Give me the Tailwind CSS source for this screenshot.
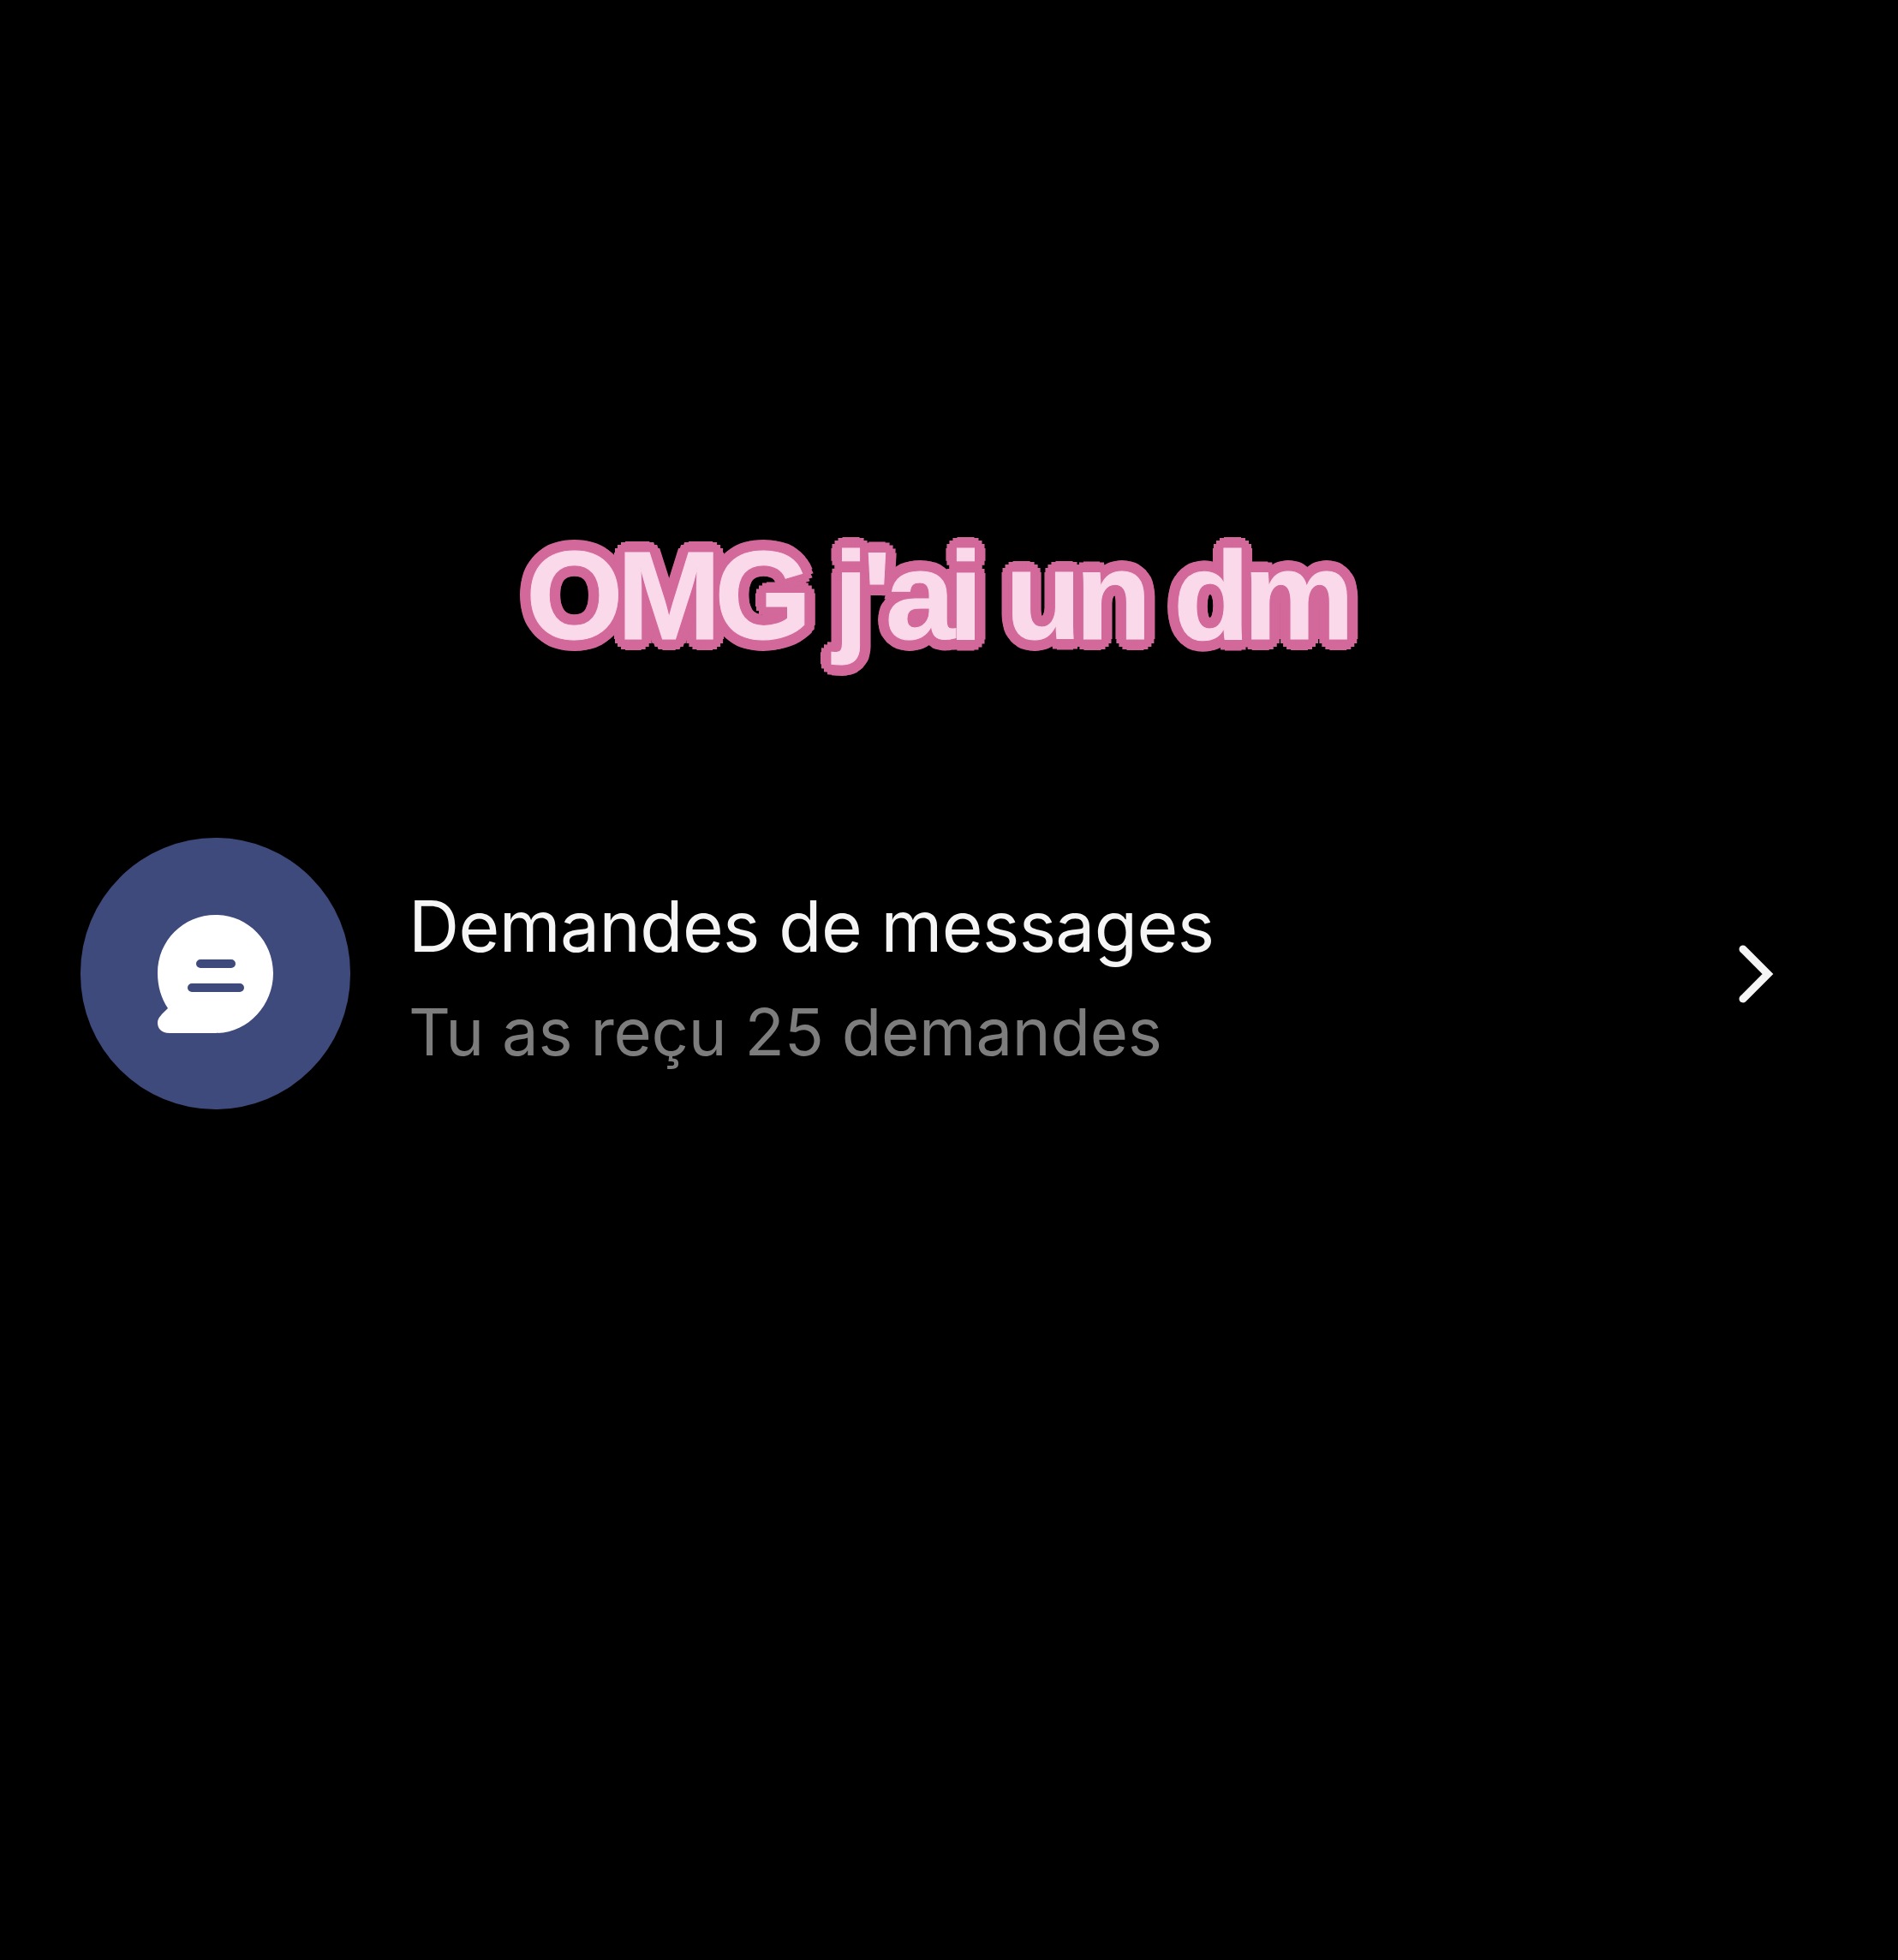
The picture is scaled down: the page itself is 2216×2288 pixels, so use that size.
<!DOCTYPE html>
<html lang="fr">
  <head>
    <meta charset="UTF-8" />
    <title>Demandes de messages</title>
    <script src="https://cdn.jsdelivr.net/npm/@tailwindcss/browser@4"></script>
  </head>
  <body class="bg-black">
    <div class="w-[2216px] h-[2288px] bg-black flex flex-col overflow-hidden">
      <!-- titre -->
      <div class="pt-[616px] h-[978px] pr-[28px] flex justify-center">
        <h1 class="h-[160px] leading-[160px] text-[146px] font-bold tracking-[-7.5px] text-[#f9d9ea] font-['Liberation_Sans',sans-serif] whitespace-nowrap [-webkit-text-stroke:1px_#f9d9ea] [text-shadow:13px_0_#d3689b,12px_5px_#d3689b,9px_9px_#d3689b,5px_12px_#d3689b,0_13px_#d3689b,-5px_12px_#d3689b,-9px_9px_#d3689b,-12px_5px_#d3689b,-13px_0_#d3689b,-12px_-5px_#d3689b,-9px_-9px_#d3689b,-5px_-12px_#d3689b,0_-13px_#d3689b,5px_-12px_#d3689b,9px_-9px_#d3689b,12px_-5px_#d3689b,7px_0_#d3689b,5px_5px_#d3689b,0_7px_#d3689b,-5px_5px_#d3689b,-7px_0_#d3689b,-5px_-5px_#d3689b,0_-7px_#d3689b,5px_-5px_#d3689b]">OMG j'ai un dm</h1>
      </div>

      <!-- ligne demandes -->
      <div class="flex items-center pl-[94px] pr-[141px]">
        <div class="w-[315px] h-[317px] rounded-full bg-[#3f4a7c] flex items-center justify-center shrink-0">
          <svg class="w-[135px] h-[138px]" viewBox="0 0 135 138">
            <path fill="#fff" d="M68 0C105 0 135 30 135 68C135 106 105 138 68 138L14 138C4 138 0 132 0 126C0 120 5 116 12 109C4 97 0 83 0 68C0 30 30 0 68 0Z" />
            <path d="M50 57H86M40 85H96" stroke="#3f4a7c" stroke-width="10" stroke-linecap="round" fill="none" />
          </svg>
        </div>
        <div class="ml-[68px] pt-[12px] flex flex-col font-['Inter',sans-serif]">
          <div class="text-[82px] leading-[122px] tracking-[-0.6px] text-[#f5f5f5]">Demandes de messages</div>
          <div class="text-[76px] leading-[122px] tracking-[-0.25px] text-[#7d7d7d]">Tu as reçu 25 demandes</div>
        </div>
        <svg class="ml-auto w-[50px] h-[68px]" viewBox="0 0 50 68" fill="none">
          <path d="M10 5L39 34L10 63" stroke="#f5f5f5" stroke-width="9" stroke-linecap="round" stroke-linejoin="miter" />
        </svg>
      </div>
    </div>
  </body>
</html>
